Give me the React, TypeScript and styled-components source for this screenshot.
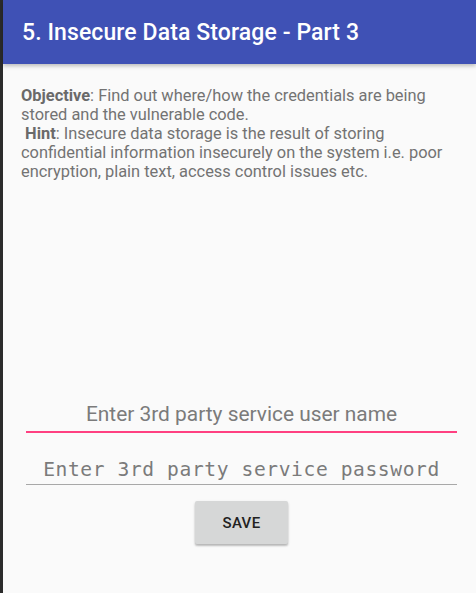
import * as React from 'react'
import styled, { createGlobalStyle } from 'styled-components'

const GlobalStyle = createGlobalStyle`
  html, body {
    margin: 0;
    padding: 0;
    background: #2b2b2b;
  }
  * {
    box-sizing: border-box;
  }
`

const Frame = styled.div`
  display: flex;
  width: 476px;
  height: 593px;
  background: #2b2b2b;
  overflow: hidden;
`

const Screen = styled.div`
  flex: 1;
  margin-left: 3px;
  display: flex;
  flex-direction: column;
  background: #fafafa;
  font-family: Roboto, 'Noto Sans', sans-serif;
`

const AppBar = styled.header`
  height: 64px;
  flex-shrink: 0;
  display: flex;
  align-items: center;
  padding-left: 19px;
  background: #3f51b5;
  color: #fff;
  font-size: 23px;
  font-weight: 500;
  letter-spacing: 0.1px;
  box-shadow: 0 2px 4px rgba(0, 0, 0, 0.25);
  position: relative;
  z-index: 1;
`

const Content = styled.main`
  display: flex;
  flex-direction: column;
  padding: 22px 18px 0 18px;
`

const Description = styled.p`
  margin: 0;
  font-size: 16.4px;
  line-height: 19px;
  color: #737373;

  b {
    font-weight: 700;
    color: #6a6a6a;
  }
`

const Form = styled.form`
  display: flex;
  flex-direction: column;
  align-items: center;
  margin-top: 212px;
  padding: 0 1px 0 5px;
`

const Field = styled.input<{ $mono?: boolean; $focused?: boolean }>`
  width: 100%;
  height: ${(p) => (p.$focused ? '40px' : '36px')};
  margin-bottom: 16px;
  border: none;
  border-bottom: ${(p) => (p.$focused ? '2px solid #ff4081' : '1px solid #a8a8a8')};
  background: transparent;
  outline: none;
  text-align: center;
  padding: ${(p) => (p.$focused ? '4px 0 0 0' : '5px 0 0 0')};
  font-family: ${(p) =>
    p.$mono ? "'DejaVu Sans Mono', 'Liberation Mono', monospace" : "Roboto, 'Noto Sans', sans-serif"};
  font-size: ${(p) => (p.$mono ? '19.6px' : '20.9px')};
  letter-spacing: ${(p) => (p.$mono ? '0.6px' : '0')};
  color: #212121;

  &::placeholder {
    color: #7b7b7b;
    opacity: 1;
  }
`

const SaveButton = styled.button`
  width: 93px;
  height: 43px;
  border: none;
  border-radius: 2px;
  background: #d6d7d7;
  color: #222;
  font-family: Roboto, 'Noto Sans', sans-serif;
  font-size: 15px;
  font-weight: 500;
  letter-spacing: 0.4px;
  box-shadow: 0 2px 2px rgba(0, 0, 0, 0.2), 0 1px 3px rgba(0, 0, 0, 0.12);
  cursor: pointer;
`

export default function App() {
  return (
    <>
      <GlobalStyle />
      <Frame>
        <Screen>
          <AppBar>5. Insecure Data Storage - Part 3</AppBar>
          <Content>
            <Description>
              <b>Objective</b>: Find out where/how the credentials are being stored and the
              vulnerable code.
              <br />
              &nbsp;<b>Hint</b>: Insecure data storage is the result of storing confidential
              information insecurely on the system i.e. poor encryption, plain text, access
              control issues etc.
            </Description>
            <Form onSubmit={(e) => e.preventDefault()}>
              <Field $focused placeholder="Enter 3rd party service user name" />
              <Field $mono type="text" placeholder="Enter 3rd party service password" />
              <SaveButton type="submit">SAVE</SaveButton>
            </Form>
          </Content>
        </Screen>
      </Frame>
    </>
  )
}
